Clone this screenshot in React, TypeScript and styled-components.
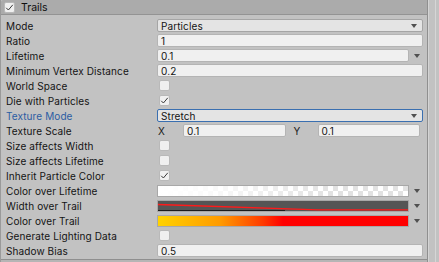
import React from "react";
import styled, { createGlobalStyle, css } from "styled-components";

const GlobalStyle = createGlobalStyle`
  html, body {
    margin: 0;
    padding: 0;
    background: #c2c2c2;
  }
  body {
    font-family: Inter, "Noto Sans", sans-serif;
    font-size: 10px;
    color: #141414;
  }
`;

const Window = styled.div`
  display: flex;
  width: 439px;
  height: 262px;
  overflow: hidden;
  background: #c2c2c2;
`;

const Panel = styled.div`
  flex: 1;
  display: flex;
  flex-direction: column;
  border-left: 1px solid #9a9a9a;
  border-right: 1px solid #8f8f8f;
`;

const Scrollbar = styled.div`
  width: 10px;
  display: flex;
  justify-content: center;
  background: #c2c2c2;
  border-left: 1px solid #d4d4d4;

  &::after {
    content: "";
    width: 1px;
    margin-left: 2px;
    background: #d6d6d6;
  }
`;

const Header = styled.div`
  height: 14px;
  display: flex;
  align-items: center;
  gap: 6px;
  padding-left: 3px;
  background: #ababab;
  border-bottom: 1px solid #939393;
  border-top-left-radius: 2px;
`;

const HeaderTitle = styled.span`
  font-size: 10.5px;
  color: #0f0f0f;
`;

const Body = styled.div`
  flex: 1;
  display: flex;
  flex-direction: column;
  padding-top: 3px;
`;

const Row = styled.div`
  display: grid;
  grid-template-columns: 151px 1fr;
  align-items: center;
  height: 15px;
  padding-left: 5px;
  padding-right: 4px;
`;

const Label = styled.span<{ $active?: boolean }>`
  white-space: nowrap;
  letter-spacing: 0.1px;
  color: ${(p) => (p.$active ? "#2b5da3" : "#141414")};
`;

const fieldBase = css`
  box-sizing: border-box;
  height: 13px;
  border-radius: 2px;
  padding-left: 3px;
  display: flex;
  align-items: center;
  line-height: 1;
  letter-spacing: 0.1px;
`;

const TextField = styled.div`
  ${fieldBase};
  background: #f0f0f0;
  border: 1px solid #b4b4b4;
`;

const Dropdown = styled.div<{ $focused?: boolean }>`
  ${fieldBase};
  justify-content: space-between;
  padding-right: 5px;
  background: #e4e4e4;
  border: 1px solid ${(p) => (p.$focused ? "#3a6fb0" : "#a5a5a5")};
`;

const WithArrow = styled.div`
  display: grid;
  grid-template-columns: 1fr 13px;
  align-items: center;
  column-gap: 1px;
`;

const Arrow = styled.span`
  width: 0;
  height: 0;
  justify-self: center;
  border-left: 3.5px solid transparent;
  border-right: 3.5px solid transparent;
  border-top: 4px solid #505050;
`;

const CheckBox = styled.div`
  box-sizing: border-box;
  width: 11px;
  height: 11px;
  margin-left: 2px;
  border-radius: 2px;
  background: #f0f0f0;
  border: 1px solid #b9b9b9;
  display: flex;
  align-items: center;
  justify-content: center;
`;

const HeaderCheck = styled(CheckBox)`
  margin-left: 0;
`;

const Vector = styled.div`
  display: grid;
  grid-template-columns: 25px 1fr 32px 1fr;
  align-items: center;
  padding-right: 3px;
  padding-left: 1px;
`;

const Axis = styled.span<{ $indent?: boolean }>`
  color: #1a1a1a;
  padding-left: ${(p) => (p.$indent ? "8px" : "0")};
`;

const Swatch = styled.div<{ $kind: "lifetime" | "trail" }>`
  box-sizing: border-box;
  height: 12px;
  border: 1px solid #a8a8a8;
  ${(p) =>
    p.$kind === "lifetime"
      ? css`
          background-image: linear-gradient(to right, #ffffff 0%, rgba(255, 255, 255, 0.85) 20%, rgba(255, 255, 255, 0) 70%),
            linear-gradient(45deg, #e2e2e2 25%, transparent 25%, transparent 75%, #e2e2e2 75%),
            linear-gradient(45deg, #e2e2e2 25%, transparent 25%, transparent 75%, #e2e2e2 75%);
          background-color: #ffffff;
          background-size: 100% 100%, 10px 10px, 10px 10px;
          background-position: 0 0, 0 0, 5px 5px;
        `
      : css`
          background: linear-gradient(to right, #ffd200 0%, #ff9a00 25%, #ff3a00 42%, #ff0000 50%, #ff0000 100%);
        `}
`;

const CurveBox = styled.div`
  box-sizing: border-box;
  height: 12px;
  background: #555555;
  border: 1px solid #a8a8a8;
  overflow: hidden;

  svg {
    display: block;
  }
`;

const Footer = styled.div`
  height: 2px;
  border-top: 1px solid #8f8f8f;
  background: #b5b5b5;
`;

const Tick: React.FC = () => (
  <svg width="9" height="9" viewBox="0 0 9 9">
    <polyline points="1.2,4.8 3.4,7 7.8,1.8" fill="none" stroke="#3a3a3a" strokeWidth="1" />
  </svg>
);

const TextRow: React.FC<{ label: string; value: string }> = ({ label, value }) => (
  <Row>
    <Label>{label}</Label>
    <TextField>{value}</TextField>
  </Row>
);

const CheckRow: React.FC<{ label: string; checked?: boolean }> = ({ label, checked }) => (
  <Row>
    <Label>{label}</Label>
    <div>
      <CheckBox>{checked && <Tick />}</CheckBox>
    </div>
  </Row>
);

export default function App() {
  return (
    <>
      <GlobalStyle />
      <Window>
        <Panel>
          <Header>
            <HeaderCheck>
              <Tick />
            </HeaderCheck>
            <HeaderTitle>Trails</HeaderTitle>
          </Header>
          <Body>
            <Row>
              <Label>Mode</Label>
              <Dropdown>
                Particles
                <Arrow />
              </Dropdown>
            </Row>
            <TextRow label="Ratio" value="1" />
            <Row>
              <Label>Lifetime</Label>
              <WithArrow>
                <TextField>0.1</TextField>
                <Arrow />
              </WithArrow>
            </Row>
            <TextRow label="Minimum Vertex Distance" value="0.2" />
            <CheckRow label="World Space" />
            <CheckRow label="Die with Particles" checked />
            <Row>
              <Label $active>Texture Mode</Label>
              <Dropdown $focused>
                Stretch
                <Arrow />
              </Dropdown>
            </Row>
            <Row>
              <Label>Texture Scale</Label>
              <Vector>
                <Axis>X</Axis>
                <TextField>0.1</TextField>
                <Axis $indent>Y</Axis>
                <TextField>0.1</TextField>
              </Vector>
            </Row>
            <CheckRow label="Size affects Width" />
            <CheckRow label="Size affects Lifetime" />
            <CheckRow label="Inherit Particle Color" checked />
            <Row>
              <Label>Color over Lifetime</Label>
              <WithArrow>
                <Swatch $kind="lifetime" />
                <Arrow />
              </WithArrow>
            </Row>
            <Row>
              <Label>Width over Trail</Label>
              <WithArrow>
                <CurveBox>
                  <svg width="250" height="10" viewBox="0 0 250 10">
                    <line x1="0" y1="9.5" x2="127" y2="9.5" stroke="#1c1c1c" strokeWidth="1" />
                    <polyline points="0,3.5 160,8.8 252,8.8" fill="none" stroke="#ff1a1a" strokeWidth="1.3" />
                  </svg>
                </CurveBox>
                <Arrow />
              </WithArrow>
            </Row>
            <Row>
              <Label>Color over Trail</Label>
              <WithArrow>
                <Swatch $kind="trail" />
                <Arrow />
              </WithArrow>
            </Row>
            <CheckRow label="Generate Lighting Data" />
            <TextRow label="Shadow Bias" value="0.5" />
          </Body>
          <Footer />
        </Panel>
        <Scrollbar />
      </Window>
    </>
  );
}
